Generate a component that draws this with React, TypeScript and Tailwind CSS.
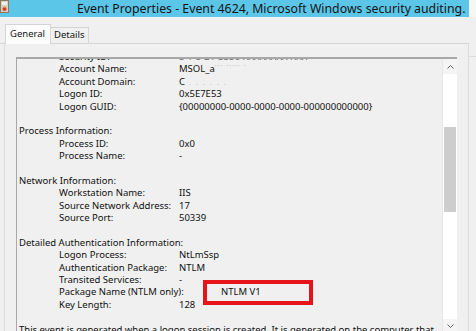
const FONT = "font-['Segoe_UI','Noto_Sans',sans-serif]";

type Row = { label?: string; value?: React.ReactNode; header?: boolean; mark?: boolean };

const rows: Row[] = [
  { label: "Security ID:", value: <span className="text-[#6a6a6a]">S-1-5-21-3556-XXXXXXXX-XXX</span> },
  {
    label: "Account Name:",
    value: (
      <>
        MSOL_a<span className="text-[#b8b8b8] tracking-[1px]">˙˙˙ ˙˙˙˙˙ ˙</span>
      </>
    ),
  },
  {
    label: "Account Domain:",
    value: (
      <>
        C<span className="text-[#c8c8c8] tracking-[1px]"> . . . . . .</span>
      </>
    ),
  },
  { label: "Logon ID:", value: "0x5E7E53" },
  { label: "Logon GUID:", value: "{00000000-0000-0000-0000-000000000000}" },
  {},
  { label: "Process Information:", header: true },
  { label: "Process ID:", value: "0x0" },
  { label: "Process Name:", value: "-" },
  {},
  { label: "Network Information:", header: true },
  { label: "Workstation Name:", value: "IIS" },
  { label: "Source Network Address:", value: "17" },
  { label: "Source Port:", value: "50339" },
  {},
  { label: "Detailed Authentication Information:", header: true },
  { label: "Logon Process:", value: "NtLmSsp" },
  { label: "Authentication Package:", value: "NTLM" },
  { label: "Transited Services:", value: "-" },
  { label: "Package Name (NTLM only):", value: "NTLM V1", mark: true },
  { label: "Key Length:", value: "128" },
  {},
  { label: "This event is generated when a logon session is created. It is generated on the computer that", header: true },
];

function WindowIcon() {
  return (
    <svg width="9" height="13" viewBox="0 0 9 13" className="shrink-0">
      <rect x="0.5" y="0.5" width="8" height="12" fill="#d8d0c0" stroke="#8a7a60" />
      <rect x="2" y="2" width="5" height="3" fill="#f4f0e8" />
      <circle cx="4.5" cy="9" r="2" fill="#e03a20" />
      <rect x="4" y="6" width="1" height="2" fill="#f0a020" />
    </svg>
  );
}

function ScrollBar() {
  return (
    <div className="w-[15px] shrink-0 flex flex-col bg-white border-l border-[#e6e6e6]">
      <div className="h-[15px] flex items-center justify-center bg-[#f4f4f4]">
        <svg width="7" height="4" viewBox="0 0 7 4">
          <path d="M0.5 3.5 L3.5 0.5 L6.5 3.5" fill="none" stroke="#606060" strokeWidth="1" />
        </svg>
      </div>
      <div className="h-[53px]" />
      <div className="h-[85px] bg-[#cdcdcd] mx-[1px]" />
      <div className="flex-1" />
      <div className="h-[14px] flex items-center justify-center bg-[#f4f4f4]">
        <svg width="7" height="4" viewBox="0 0 7 4">
          <path d="M0.5 0.5 L3.5 3.5 L6.5 0.5" fill="none" stroke="#606060" strokeWidth="1" />
        </svg>
      </div>
    </div>
  );
}

export default function App() {
  return (
    <div className={`w-[476px] h-[331px] overflow-hidden bg-[#f0f0f0] flex flex-col ${FONT}`}>
      <div className="h-[17px] flex shrink-0">
        <div className="w-[469px] bg-[#5cc6e9] flex items-start">
          <WindowIcon />
          <div className="pl-[68px] text-[12.3px] leading-[17px] text-[#141414] whitespace-nowrap">
            Event Properties - Event 4624, Microsoft Windows security auditing.
          </div>
        </div>
        <div className="flex-1 bg-[#f6f6f6]" />
      </div>

      <div className="flex shrink-0 mt-[7px]">
        <div className="w-[469px] h-[20px] pl-[5px] flex items-end border-b border-[#d5d5d5]">
          <div className="h-[20px] w-[46px] bg-[#fcfcfc] border border-b-0 border-[#d5d5d5] text-[9.5px] text-[#141414] flex items-center pl-[4px] -mb-[1px]">
            General
          </div>
          <div className="h-[16px] w-[38px] bg-[#f0f0f0] border border-l-0 border-b-0 border-[#d5d5d5] text-[9.5px] text-[#141414] flex items-center pl-[3px]">
            Details
          </div>
        </div>
        <div className="flex-1" />
      </div>

      <div className="flex flex-1 min-h-0">
        <div className="w-[465px] ml-[4px] border-l border-r border-[#dcdcdc] bg-[#f0f0f0] pt-[13px] pl-[11px]">
          <div className="w-[441px] h-[276px] flex border-t-2 border-l border-[#a8a8a8] bg-[#f0f0f0]">
            <div className="flex-1 overflow-hidden">
              <div className="-mt-[8px] text-[9.5px] leading-[12.4px] text-[#111111] whitespace-nowrap">
                {rows.map((r, i) =>
                  !r.label ? (
                    <div key={i} className="h-[12.4px]" />
                  ) : r.header ? (
                    <div key={i} className="pl-[2px] h-[12.4px]">
                      {r.label}
                    </div>
                  ) : (
                    <div key={i} className="pl-[42px] h-[12.4px] flex">
                      <div className="w-[120px] shrink-0">{r.label}</div>
                      {r.mark ? (
                        <div className="relative">
                          <span className="pl-[42px]">{r.value}</span>
                          <div className="absolute left-[24px] top-[-6px] w-[110px] h-[25px] border-4 border-[#e8141c]" />
                        </div>
                      ) : (
                        <div>{r.value}</div>
                      )}
                    </div>
                  )
                )}
              </div>
            </div>
            <ScrollBar />
          </div>
        </div>
        <div className="flex-1 mt-[12px] border-t border-[#dcdcdc]" />
      </div>
    </div>
  );
}
